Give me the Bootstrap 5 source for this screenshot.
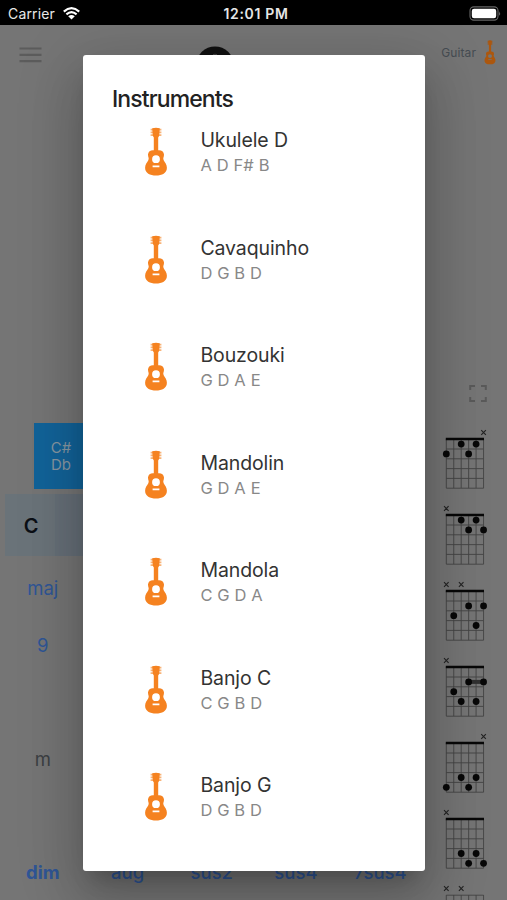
<!DOCTYPE html>
<html lang="en">
<head>
<meta charset="utf-8">
<meta name="viewport" content="width=device-width, initial-scale=1">
<title>Instruments</title>
<link href="https://cdn.jsdelivr.net/npm/bootstrap@5.3.0/dist/css/bootstrap.min.css" rel="stylesheet">
<style>
body{font-family:Inter,"Liberation Sans",sans-serif;background:#757575;height:900px}
.statusbar{height:25px;background:#000;color:#e8e8e8;font-size:14px;line-height:27px;display:grid;grid-template-columns:1fr auto 1fr;padding:0 6px 0 8px}
.carrier{letter-spacing:.15px}
.clock{font-weight:600;font-size:14px;letter-spacing:.65px;margin-right:-3px}
.topbar{height:59px;padding:0 11px 0 19px}
.guitar-label{font-size:12px;color:#454c52;letter-spacing:.1px}
.logo-dot{margin-left:154px;margin-top:21px}
.main-area{height:816px;overflow:hidden}
.keys{width:425px;padding-top:339px}
.key-sharp{width:66px;height:66px;margin-left:34px;background:#126399;color:#8797a2;font-size:15px;line-height:17.5px;padding-right:12px}
.key-row{height:62px;margin:5px 0 0 5px;background:#666f78}
.key-c{width:50px;background:#6a7379;color:#0b0f16;font-weight:600;font-size:20px;padding:2px 0 0 2px}
.chord{width:85.5px;text-align:center;font-size:18.5px;line-height:26px;color:#2f5596}
.chord-tail{width:84.2px}
.chord-m{color:#3c4043}
.chords-col{width:82px;padding-top:299px}
.expand{margin-left:44px;height:20px}
.diagrams{margin:24px 0 0 15px}
.scrim .panel{width:342px;height:815.5px;background:#fff;border-radius:3px;margin:55px 0 0 83px;padding:29px 29px 0;box-shadow:0 15px 20px -9px rgba(0,0,0,.2),0 32px 51px 4px rgba(0,0,0,.14),0 12px 62px 11px rgba(0,0,0,.12)}
.scrim{z-index:10}
.panel-title{font-size:23px;line-height:30px;font-weight:500;letter-spacing:-.9px;color:#222;margin:0}
.inst{height:107.5px;padding-top:12.4px}
.inst-icon{width:30px;height:50px;margin:1px 29.4px 0 29px}
.inst-name{font-size:19.5px;line-height:28px;color:#333;letter-spacing:-.1px}
.inst-notes{font-size:16.5px;line-height:23px;color:#888;letter-spacing:.12px}
</style>
<script src="https://cdn.jsdelivr.net/npm/bootstrap@5.3.0/dist/js/bootstrap.bundle.min.js"></script>
</head>
<body class="overflow-hidden position-relative">
<svg width="0" height="0" class="position-absolute" aria-hidden="true">
<symbol id="guitar" viewBox="0 0 24 50">
<path fill="currentColor" fill-rule="evenodd" d="M8.2 1.3Q12 0 15.8 1.3L15.2 8.8 14.2 10.6V23.2C17.2 22.8 19.8 24.4 20 27.4C20.1 30 18.6 31 19.7 33.2C20.9 35.5 22.9 37.2 22.9 40.8C22.9 46.2 18 48.6 12 48.6S1.1 46.2 1.1 40.8C1.1 37.2 3.1 35.5 4.3 33.2C5.4 31 3.9 30 4 27.4C4.2 24.4 6.8 22.8 9.8 23.2V10.6L8.8 8.8ZM12 28.3a3.9 3.9 0 1 0 0 7.8a3.9 3.9 0 1 0 0-7.8ZM8.6 38.6V40.2H15.4V38.6Z"/>
<path stroke="currentColor" stroke-width="1.7" opacity=".6" d="M6.6 2.7H17.4M6.6 5.4H17.4M6.6 8.1H17.4"/>
</symbol>
</svg>

<header class="statusbar">
<div class="carrier d-flex align-items-center"><span>Carrier</span>
<svg class="ms-2" width="17" height="13" viewBox="0 0 17 13" fill="none" stroke="#fff" stroke-width="2.1"><path d="M.8 4.6Q8.5-2.2 16.2 4.6M3.4 7.4Q8.5 2.9 13.6 7.4"/><path fill="#fff" stroke="none" d="M5.2 9.3Q8.5 6.6 11.8 9.3L8.5 12.6Z"/></svg></div>
<div class="clock">12:01 PM</div>
<div class="d-flex justify-content-end align-items-center"><svg width="32" height="15" viewBox="0 0 32 15"><rect x="1" y=".9" width="28" height="13.2" rx="3.8" fill="none" stroke="#666" stroke-width="1.1"/><rect x="2.8" y="2.7" width="24.4" height="9.6" rx="2.2" fill="#fff"/><path d="M30.2 5.2Q32 7.5 30.2 9.8Z" fill="#777"/></svg></div>
</header>

<nav class="topbar d-flex align-items-start">
<svg style="margin-top:21px" width="23" height="18" viewBox="0 0 23 18" stroke="#5c5c5c" stroke-width="2.2"><path d="M.5 2.5H22.5M.5 8.8H22.5M.5 15.2H22.5"/></svg>
<svg class="logo-dot" width="38" height="38" viewBox="0 0 38 38"><circle cx="19" cy="19" r="18.6" fill="#111"/><path d="M17 8.7Q19 7.7 21 8.7" stroke="#444" fill="none"/></svg>
<div class="ms-auto d-flex align-items-center" style="margin-top:15px"><span class="guitar-label me-1 pe-1">Guitar</span><svg width="12" height="25" style="color:#ac570e"><use href="#guitar"/></svg></div>
</nav>

<main class="main-area d-flex">
<section class="keys">
<div class="key-sharp d-flex flex-column align-items-center justify-content-center"><div>C#</div><div>Db</div></div>
<div class="key-row d-flex"><div class="key-c d-flex align-items-center justify-content-center">C</div></div>
<div class="chord" style="margin-top:19px">maj</div>
<div class="chord" style="margin-top:31px">9</div>
<div class="chord chord-m" style="margin-top:88px">m</div>
<div class="d-flex" style="margin-top:87px"><div class="chord fw-bold">dim</div><div class="chord chord-tail fw-medium">aug</div><div class="chord chord-tail fw-medium">sus2</div><div class="chord chord-tail fw-medium">sus4</div><div class="chord chord-tail fw-medium">7sus4</div></div>
</section>
<aside class="chords-col">
<svg class="expand d-block" width="18" viewBox="0 0 18 20" fill="none" stroke="#5a5a5a" stroke-width="2"><path d="M1.2 7V3H6M12 3H16.8V7M16.8 14V18H12M6 18H1.2V14"/></svg>
<div class="diagrams" id="diagrams"></div>
</aside>
</main>

<div class="scrim position-absolute top-0 start-0">
<section class="panel" role="dialog" aria-labelledby="panelTitle">
<h1 class="panel-title" id="panelTitle">Instruments</h1>
<div id="instruments"></div>
</section>
</div>

<script>
const instruments = [["Ukulele D","A D F# B"],["Cavaquinho","D G B D"],["Bouzouki","G D A E"],["Mandolin","G D A E"],["Mandola","C G D A"],["Banjo C","C G B D"],["Banjo G","D G B D"]];
document.getElementById("instruments").innerHTML = instruments.map(([n, t]) =>
`<div class="inst d-flex align-items-start"><svg class="inst-icon" style="color:#f58220"><use href="#guitar"/></svg><div><div class="inst-name">${n}</div><div class="inst-notes">${t}</div></div></div>`).join("");

// Each chord: muted strings, [string, fret] dots, optional barre [from, to, fret]
const chords = [
{x:[6], d:[[3,1],[5,1],[1,2],[4,2]]},
{x:[1], d:[[3,1],[5,1],[4,2],[6,2]]},
{x:[1,3], d:[[4,2],[6,2],[2,3],[5,4]]},
{x:[1], d:[[4,2],[6,2],[2,3],[3,4],[5,4]], b:[4,6,2]},
{x:[6], d:[[3,4],[5,4],[1,5],[4,5]]},
{x:[1], d:[[3,4],[5,4],[4,5],[6,5]]},
{x:[1,3], d:[], thin:true}];
const sx = s => 6.3 + (s - 1) * 7.45, fy = f => 12.2 + (f - .5) * 9.8;
document.getElementById("diagrams").innerHTML = chords.map(c => {
let g = "";
for (let i = 0; i < 6; i++) g += `<path d="M${sx(i+1)} 12V61.2M6.3 ${12.2+i*9.8}H43.55" stroke="#444" stroke-width=".9"/>`;
if (!c.thin) g += `<path d="M5.8 12H44" stroke="#080808" stroke-width="2.4"/>`;
c.x.forEach(s => g += `<path d="M${sx(s)-2.3} 3.2l4.6 4.6m0-4.6l-4.6 4.6" stroke="#222" stroke-width="1.1"/>`);
if (c.b) g += `<path d="M${sx(c.b[0])} ${fy(c.b[2])}H${sx(c.b[1])}" stroke="#303030" stroke-width="4"/>`;
c.d.forEach(([s, f]) => g += `<circle cx="${sx(s)}" cy="${fy(f)}" r="3.4" fill="#080808"/>`);
return `<svg class="d-block" width="52" height="76" viewBox="0 0 52 76">${g}</svg>`;
}).join("");
</script>
</body>
</html>
